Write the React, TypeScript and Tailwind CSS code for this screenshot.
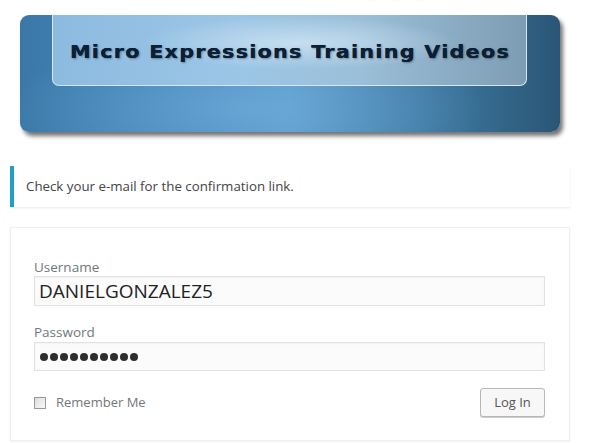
import React from 'react';

const font = { fontFamily: '"Open Sans", "Liberation Sans", sans-serif' };

function Banner() {
  return (
    <div className="mx-[20px] mt-[15px] h-[117px] w-[540px] rounded-[9px] bg-[radial-gradient(ellipse_at_42%_80%,rgba(120,180,225,0.55),rgba(120,180,225,0)_55%),linear-gradient(90deg,#3a78a8_0%,#4b8cc0_35%,#5b9acb_50%,#3f7aa3_75%,#2a5676_100%)] shadow-[3px_4px_4px_rgba(0,0,0,0.55)]">
      <div className="ml-[32px] h-[71px] w-[475px] rounded-b-[7px] border border-t-0 border-[#d6e8f5] bg-[radial-gradient(ellipse_at_52%_40%,#c6def0_0%,rgba(198,222,240,0)_45%),linear-gradient(90deg,#8cbbe0_0%,#9cc6e6_40%,#9bbfd8_65%,#7d9db3_100%)] pt-[25px] pl-[17px]">
        <div
          className="inline-block origin-left scale-x-[1.15] text-[18px] leading-[18px] font-extrabold tracking-[1.1px] text-[#0b2036] [text-shadow:1px_1px_2px_rgba(0,0,0,0.35),0_0_0.4px_#0b2036]"
          style={{ fontFamily: '"DejaVu Sans", Verdana, sans-serif' }}
        >
          Micro Expressions Training Videos
        </div>
      </div>
    </div>
  );
}

export default function App() {
  return (
    <div className="min-h-[443px] w-full bg-white" style={font}>
      <Banner />

      {/* notice */}
      <div className="mx-[10px] mt-[34px] flex h-[41px] w-[560px] items-center border-l-4 border-[#1fa0c4] bg-white pl-[12px] shadow-[0_1px_2px_rgba(0,0,0,0.09)]">
        <p className="text-[13.3px] text-[#444]">Check your e-mail for the confirmation link.</p>
      </div>

      {/* login form */}
      <div className="mx-[10px] mt-[20px] h-[214px] w-[560px] border border-[#f0f0f0] bg-white pt-[30px] pr-[24px] pl-[23px] shadow-[0_1px_2px_rgba(0,0,0,0.06)]">
        <label className="block text-[13.5px] leading-[18px] text-[#72777c]">Username</label>
        <div className="flex h-[30px] w-full items-center border border-[#e2e2e2] bg-[#fbfbfb] pl-[4px] text-[19px] text-[#222] shadow-[inset_0_1px_2px_rgba(0,0,0,0.04)]">
          DANIELGONZALEZ5
        </div>

        <label className="mt-[17px] block text-[13.5px] leading-[19px] text-[#72777c]">Password</label>
        <div className="flex h-[29px] w-full items-center gap-[2px] border border-[#e2e2e2] bg-[#fbfbfb] pl-[5px] shadow-[inset_0_1px_2px_rgba(0,0,0,0.04)]">
          {Array.from({ length: 10 }).map((_, i) => (
            <span key={i} className="h-[8px] w-[8px] rounded-full bg-[#2e2e2e]" />
          ))}
        </div>

        <div className="mt-[17px] flex items-center justify-between">
          <label className="flex items-center gap-[10px] text-[13px] text-[#72777c]">
            <span className="h-[12px] w-[12px] border border-[#999] bg-[linear-gradient(135deg,#dcdcdc,#fafafa)]" />
            Remember Me
          </label>
          <button className="h-[29px] w-[65px] rounded-[3px] border border-[#b8b8b8] bg-[#f7f7f7] text-[13px] text-[#555] shadow-[0_1px_0_#ccc]">
            Log In
          </button>
        </div>
      </div>
    </div>
  );
}
